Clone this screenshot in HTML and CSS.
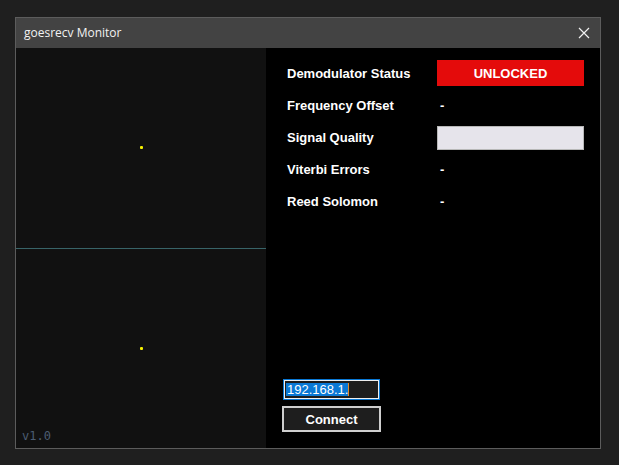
FILE: index.html
```html
<!DOCTYPE html>
<html>
<head>
<meta charset="utf-8">
<title>goesrecv Monitor</title>
<link rel="stylesheet" href="styles.css">
</head>
<body>
<div class="window">
  <div class="titlebar">
    <span class="title">goesrecv Monitor</span>
    <svg class="close" width="12" height="12" viewBox="0 0 12 12"><path d="M1 1 L11 11 M11 1 L1 11" stroke="#f0f0f0" stroke-width="1.2" fill="none"/></svg>
  </div>
  <div class="content">
    <div class="scope">
      <div class="plot"><span class="dot"></span></div>
      <div class="divider"></div>
      <div class="plot"><span class="dot"></span></div>
      <span class="version">v1.0</span>
    </div>
    <div class="panel">
      <div class="stats">
        <div class="row"><span class="label">Demodulator Status</span><span class="badge">UNLOCKED</span></div>
        <div class="row"><span class="label">Frequency Offset</span><span class="value">-</span></div>
        <div class="row"><span class="label">Signal Quality</span><span class="meter"></span></div>
        <div class="row"><span class="label">Viterbi Errors</span><span class="value">-</span></div>
        <div class="row"><span class="label">Reed Solomon</span><span class="value">-</span></div>
      </div>
      <div class="connect">
        <div class="input"><span class="sel">192.168.1.</span><span class="caret"></span></div>
        <div class="button">Connect</div>
      </div>
    </div>
  </div>
</div>
</body>
</html>
```
FILE: styles.css
```css
html, body {
  margin: 0;
  padding: 0;
  background: #1f1f1f;
  font-family: "Liberation Sans", Arial, sans-serif;
}
.window {
  margin: 17px 0 0 15px;
  width: 584px;
  height: 430px;
  border: 1px solid #5c5c5c;
  display: flex;
  flex-direction: column;
}
.titlebar {
  height: 30px;
  background: #434343;
  display: flex;
  align-items: center;
  justify-content: space-between;
  padding: 0 10px 0 8px;
}
.title {
  color: #f2f2f2;
  font-family: "Open Sans", "Noto Sans", sans-serif;
  font-size: 12px;
  margin-top: -1px;
}
.close {
  display: block;
  margin-top: -1px;
}
.content {
  flex: 1;
  display: flex;
}
.scope {
  width: 250px;
  background: #111111;
  display: flex;
  flex-direction: column;
  position: relative;
}
.plot {
  flex: 1;
  display: flex;
  align-items: center;
  justify-content: center;
}
.divider {
  height: 1px;
  background: #386468;
}
.dot {
  width: 3px;
  height: 3px;
  background: #f5f000;
  border-radius: 1px;
}
.version {
  position: absolute;
  left: 6px;
  bottom: 5px;
  font-family: "DejaVu Sans Mono", "Liberation Mono", monospace;
  font-size: 12px;
  color: #4c5d72;
}
.panel {
  flex: 1;
  background: #000;
  display: flex;
  flex-direction: column;
  justify-content: space-between;
  padding: 12px 16px 16px 16px;
}
.stats {
  display: flex;
  flex-direction: column;
  gap: 6px;
}
.row {
  height: 26px;
  display: flex;
  align-items: center;
  padding-left: 5px;
}
.label {
  width: 150px;
  color: #fff;
  font-weight: bold;
  font-size: 13px;
}
.value {
  color: #fff;
  font-size: 13px;
  font-weight: bold;
  padding-left: 3px;
}
.badge {
  width: 147px;
  height: 26px;
  background: #e40b0b;
  color: #fff;
  font-weight: bold;
  font-size: 13px;
  display: flex;
  align-items: center;
  justify-content: center;
}
.meter {
  width: 145px;
  height: 22px;
  background: #e6e4eb;
  border: 1px solid #b8b8b8;
  margin-top: 2px;
}
.connect {
  display: flex;
  flex-direction: column;
  align-items: flex-start;
  gap: 6px;
}
.input {
  width: 93px;
  height: 17px;
  margin-left: 1px;
  border: 1px solid #0a78d4;
  box-shadow: inset 0 0 0 1px #f0f0f0;
  background: #1e1e1e;
  padding: 1px;
  display: flex;
  align-items: center;
}
.sel {
  background: #0a78d4;
  color: #fff;
  font-size: 13px;
  line-height: 13px;
  padding: 0 0 0 1px;
  margin-left: 1px;
}
.caret {
  width: 1px;
  height: 13px;
  background: #e08a2a;
}
.button {
  width: 95px;
  height: 22px;
  border: 2px solid #cfcfcf;
  background: #1e1e1e;
  color: #fff;
  font-weight: bold;
  font-size: 13px;
  display: flex;
  align-items: center;
  justify-content: center;
}
```
